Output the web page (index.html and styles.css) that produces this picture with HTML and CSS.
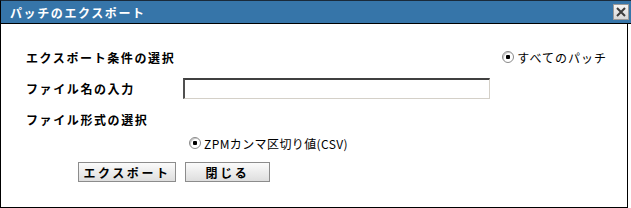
FILE: index.html
```html
<!DOCTYPE html>
<html lang="ja">
<head>
  <meta charset="UTF-8" />
  <title>パッチのエクスポート</title>
  <link rel="stylesheet" href="styles.css">
</head>
<body>

  <div class="dialog">
    <div class="titlebar">
      <span class="title">パッチのエクスポート</span>
      <button class="close" title="閉じる">
        <svg width="10" height="10" viewBox="0 0 10 10">
          <path d="M1 1 L9 9 M9 1 L1 9" stroke="#3c3c3c" stroke-width="2" />
        </svg>
      </button>
    </div>

    <div class="content">
      <div class="row row-criteria">
        <span class="label">エクスポート条件の選択</span>
        <label class="choice">
          <input type="radio" name="criteria" checked>
          <span>すべてのパッチ</span>
        </label>
      </div>

      <div class="row row-file">
        <span class="label label-fixed">ファイル名の入力</span>
        <input type="text" class="text-input">
      </div>

      <div class="row row-format">
        <span class="label">ファイル形式の選択</span>
      </div>

      <div class="row row-csv">
        <label class="choice choice-tight">
          <input type="radio" name="format" checked>
          <span>ZPMカンマ区切り値(CSV)</span>
        </label>
      </div>

      <div class="actions">
        <button class="btn btn-export">エクスポート</button>
        <button class="btn btn-close">閉じる</button>
      </div>
    </div>
  </div>

</body>
</html>
```

FILE: styles.css
```css
* {
  margin: 0;
  padding: 0;
  box-sizing: border-box;
}

body {
  background: #fff;
  font-family: "Noto Sans CJK JP", "DejaVu Sans", sans-serif;
  font-size: 12px;
  color: #000;
}

.dialog {
  width: 631px;
  height: 208px;
}

.titlebar {
  height: 24px;
  background: #3675a9;
  border-top: 1px solid #1a2a3a;
  border-left: 1px solid #000;
  border-bottom: 1px solid #000;
  display: flex;
  align-items: center;
  justify-content: space-between;
  padding: 0 2px 0 9px;
}

.title {
  color: #fff;
  font-weight: 700;
  font-size: 12px;
  letter-spacing: 1.6px;
}

.close {
  width: 16px;
  height: 16px;
  background: linear-gradient(#f4f4f4, #d8d8d8);
  border: 1px solid #9a9a9a;
  display: flex;
  align-items: center;
  justify-content: center;
}

.content {
  width: 628px;
  height: 184px;
  border-left: 1px solid #000;
  border-right: 1px solid #000;
  border-bottom: 1px solid #000;
  padding: 23px 0 0 25px;
}

.row {
  display: flex;
  align-items: center;
  height: 20px;
}

.label {
  font-weight: 700;
  letter-spacing: 1.6px;
}

.row-criteria {
  justify-content: space-between;
  padding-right: 20px;
}

.row-file {
  margin-top: 11px;
  height: 21px;
}

.label-fixed {
  width: 157px;
}

.text-input {
  width: 307px;
  height: 21px;
  border-top: 2px solid #404040;
  border-left: 2px solid #505050;
  border-right: 1px solid #d4d0c8;
  border-bottom: 1px solid #d4d0c8;
  outline: none;
}

.row-format {
  margin-top: 10px;
}

.row-csv {
  margin-top: 4px;
  padding-left: 163px;
}

.choice {
  display: flex;
  align-items: center;
  gap: 3px;
  letter-spacing: 1px;
}

.choice-tight {
  letter-spacing: 0.4px;
}

.choice input {
  appearance: none;
  width: 12px;
  height: 12px;
  border-radius: 50%;
  border: 1px solid #8a8a8a;
  background: radial-gradient(circle, #000 0 2px, #fff 2.5px);
  box-shadow: inset 1px 1px 0 #c8c8c8;
}

.actions {
  display: flex;
  gap: 9px;
  margin-top: 9px;
  padding-left: 52px;
}

.btn {
  height: 20px;
  border: 1px solid #8c8c8c;
  background: linear-gradient(#fbfbfb, #dedede);
  font-family: inherit;
  font-size: 12px;
  font-weight: 700;
  letter-spacing: 2.6px;
}

.btn-export {
  width: 98px;
}

.btn-close {
  width: 85px;
}
```
